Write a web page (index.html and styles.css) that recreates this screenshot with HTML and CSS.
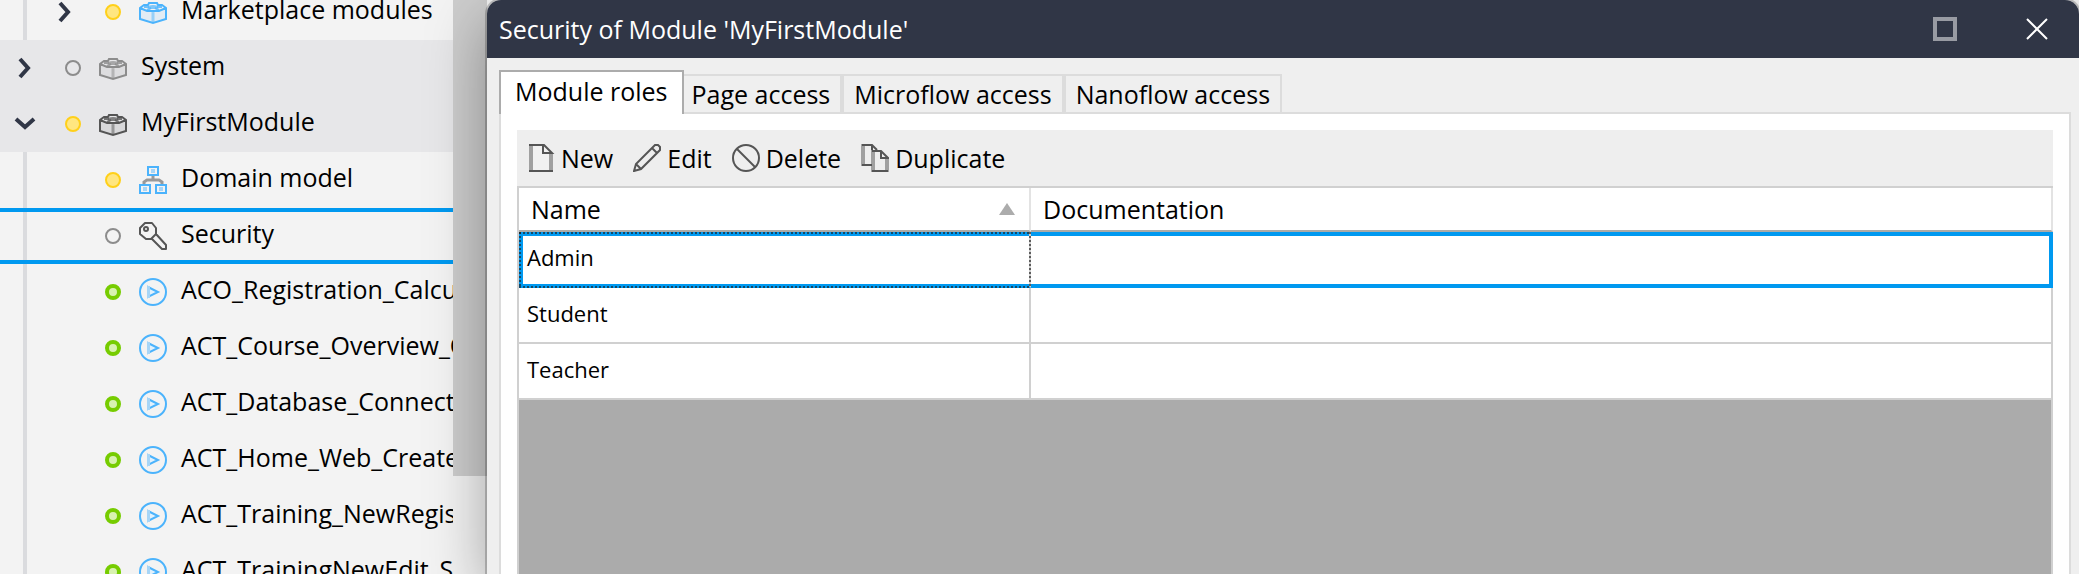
FILE: index.html
```html
<!DOCTYPE html>
<html lang="en">
<head>
<meta charset="utf-8">
<title>Security of Module 'MyFirstModule'</title>
<link rel="stylesheet" href="styles.css">
</head>
<body>
<svg class="defs" aria-hidden="true">
  <symbol id="chevron-right" viewBox="0 0 28 28"><path d="M9 5l8 9-8 9" fill="none" stroke="#303646" stroke-width="4"/></symbol>
  <symbol id="chevron-down" viewBox="0 0 28 28"><path d="M5 9l9 8 9-8" fill="none" stroke="#303646" stroke-width="4"/></symbol>
  <symbol id="module" viewBox="0 0 28 28">
    <path d="M1 11l13 4v10L1 21zM27 11l-13 4v10l13-4z" fill="currentColor" fill-opacity=".1"/>
    <path d="M12.500 14h3v11h-3z" fill="currentColor" fill-opacity=".5"/>
    <path d="M1 10v11l13 4 13-4V10l-4-3h-4l-1-2h-8L9 7H5zM1 10l7 3h12l7-3" fill="none" stroke="currentColor" stroke-width="2"/>
    <ellipse cx="14" cy="9" rx="5" ry="2" fill="currentColor" fill-opacity=".7"/>
    <path d="M5 9h5M18 9h5M8 12l4-2M20 12l-4-2" fill="none" stroke="currentColor" stroke-width="2" stroke-opacity=".8"/>
  </symbol>
  <symbol id="domain" viewBox="0 0 28 28">
    <path d="M5 18v-2l3-2h12l3 2v2M14 10v3" fill="none" stroke="#999" stroke-width="3"/>
    <path d="M9 1h10v8H9zM1 19h10v8H1zM17 19h10v8H17z" fill="#f3f3f3" stroke="#4bb3fc" stroke-width="2"/>
    <path d="M12 3h4v4h-4zM4 21h4v4H4zM20 21h4v4h-4z" fill="#a6d5f7"/>
  </symbol>
  <symbol id="key" viewBox="0 0 28 28">
    <path d="M6 1h7l4 5v6l10 11v4h-4L13 17H7l-6-5V6z" fill="none" stroke="#555" stroke-width="2" stroke-linejoin="round"/>
    <circle cx="7" cy="7" r="2" fill="none" stroke="#555" stroke-width="2"/>
    <path d="M12 17l5-5" stroke="#555" stroke-width="2"/>
  </symbol>
  <symbol id="flow" viewBox="0 0 28 28">
    <circle cx="14" cy="14" r="13" fill="none" stroke="#4bb3fc" stroke-width="2"/>
    <path d="M9 9l10 5-10 5z" fill="#e2f1fc" stroke="#4bb3fc" stroke-width="2"/>
    <path d="M8 8h3v12H8z" fill="#a6d5f7"/>
  </symbol>
  <symbol id="dot-yellow" viewBox="0 0 16 16"><circle cx="8" cy="8" r="7" fill="#ffe680" stroke="#ffd01a" stroke-width="2"/></symbol>
  <symbol id="dot-empty" viewBox="0 0 16 16"><circle cx="8" cy="8" r="7" fill="none" stroke="#8c8c8c" stroke-width="2"/></symbol>
  <symbol id="dot-green" viewBox="0 0 16 16"><circle cx="8" cy="8" r="6" fill="#d8f2b0" stroke="#76cc00" stroke-width="4"/></symbol>
</svg>
<div class="app">
  <nav class="explorer" aria-label="Project explorer">
    <ul class="tree">
      <li class="node nested"><button class="expander" aria-label="Expand"><svg class="icon"><use href="#chevron-right"/></svg></button><svg class="dot"><use href="#dot-yellow"/></svg><svg class="icon blue"><use href="#module"/></svg><span class="label">Marketplace modules</span></li>
      <li class="node module"><button class="expander" aria-label="Expand"><svg class="icon"><use href="#chevron-right"/></svg></button><svg class="dot"><use href="#dot-empty"/></svg><svg class="icon gray"><use href="#module"/></svg><span class="label">System</span></li>
      <li class="node module"><button class="expander" aria-label="Collapse"><svg class="icon"><use href="#chevron-down"/></svg></button><svg class="dot"><use href="#dot-yellow"/></svg><svg class="icon dark"><use href="#module"/></svg><span class="label">MyFirstModule</span></li>
      <li class="node nested"><span class="expander"></span><svg class="dot"><use href="#dot-yellow"/></svg><svg class="icon"><use href="#domain"/></svg><span class="label">Domain model</span></li>
      <li class="node nested selected"><span class="expander"></span><svg class="dot"><use href="#dot-empty"/></svg><svg class="icon"><use href="#key"/></svg><span class="label">Security</span></li>
      <li class="node nested"><span class="expander"></span><svg class="dot"><use href="#dot-green"/></svg><svg class="icon"><use href="#flow"/></svg><span class="label">ACO_Registration_Calcu</span></li>
      <li class="node nested"><span class="expander"></span><svg class="dot"><use href="#dot-green"/></svg><svg class="icon"><use href="#flow"/></svg><span class="label">ACT_Course_Overview_O</span></li>
      <li class="node nested"><span class="expander"></span><svg class="dot"><use href="#dot-green"/></svg><svg class="icon"><use href="#flow"/></svg><span class="label">ACT_Database_Connect</span></li>
      <li class="node nested"><span class="expander"></span><svg class="dot"><use href="#dot-green"/></svg><svg class="icon"><use href="#flow"/></svg><span class="label">ACT_Home_Web_Create</span></li>
      <li class="node nested"><span class="expander"></span><svg class="dot"><use href="#dot-green"/></svg><svg class="icon"><use href="#flow"/></svg><span class="label">ACT_Training_NewRegis</span></li>
      <li class="node nested"><span class="expander"></span><svg class="dot"><use href="#dot-green"/></svg><svg class="icon"><use href="#flow"/></svg><span class="label">ACT_TrainingNewEdit_S</span></li>
    </ul>
  </nav>
  <div class="scrollbar"><div class="thumb"></div></div>
  <section class="dialog" role="dialog" aria-labelledby="dialog-title">
    <header class="titlebar">
      <h1 class="title" id="dialog-title">Security of Module 'MyFirstModule'</h1>
      <button class="window-button" aria-label="Maximize"><svg class="window-icon" viewBox="0 0 24 24"><rect x="2" y="2" width="20" height="20" fill="none" stroke="#989ba3" stroke-width="4"/></svg></button>
      <button class="window-button" aria-label="Close"><svg class="window-icon" viewBox="0 0 24 24"><path d="M2 2l20 20M22 2L2 22" fill="none" stroke="#fff" stroke-width="2"/></svg></button>
    </header>
    <div class="tabs" role="tablist">
      <button class="tab active" role="tab" aria-selected="true">Module roles</button>
      <button class="tab" role="tab" aria-selected="false">Page access</button>
      <button class="tab" role="tab" aria-selected="false">Microflow access</button>
      <button class="tab" role="tab" aria-selected="false">Nanoflow access</button>
    </div>
    <div class="panel" role="tabpanel">
      <div class="toolbar">
        <button class="tool"><svg class="icon" viewBox="0 0 28 28"><path d="M3 1h14l8 8v18H3z" fill="#f1f1f1"/><path d="M4 0v28M24 9v19" stroke="#a0a0a0" stroke-width="4"/><path d="M2 1h15l8 8h-9V1M2 27h24" fill="none" stroke="#555" stroke-width="2"/></svg>New</button>
        <button class="tool"><svg class="icon" viewBox="0 0 28 28"><path d="M1 27l2-7L22 1h3l2 2v3L8 25zM3 20l5 5M19 4l5 5" fill="none" stroke="#555" stroke-width="2"/></svg>Edit</button>
        <button class="tool"><svg class="icon" viewBox="0 0 28 28"><circle cx="14" cy="14" r="13" fill="none" stroke="#555" stroke-width="2"/><path d="M5 5l18 18" stroke="#555" stroke-width="2"/></svg>Delete</button>
        <button class="tool"><svg class="icon" viewBox="0 0 28 28"><path d="M2 0v22M12 6v22M26 13v15" stroke="#a0a0a0" stroke-width="4"/><path d="M1 1h10l5 5M1 21h10M11 1v5M11 7h9l7 7h-7V7M11 27h16" fill="none" stroke="#555" stroke-width="2"/></svg>Duplicate</button>
      </div>
      <div class="grid">
        <table class="roles">
          <thead>
            <tr><th class="name-column" scope="col" aria-sort="ascending"><span class="heading">Name<svg class="sort" viewBox="0 0 16 12"><path d="M8 0l8 12H0z" fill="#acacac"/></svg></span></th><th scope="col"><span class="heading">Documentation</span></th></tr>
          </thead>
          <tbody>
            <tr class="current"><td class="focused">Admin</td><td></td></tr>
            <tr><td>Student</td><td></td></tr>
            <tr><td>Teacher</td><td></td></tr>
          </tbody>
        </table>
      </div>
    </div>
  </section>
</div>
</body>
</html>
```
FILE: styles.css
```css
* { box-sizing: border-box; }

body {
  margin: 0;
  background: #f3f3f3;
  color: #000;
  font: 25px/32px "Open Sans", "Noto Sans", sans-serif;
}

button {
  margin: 0;
  padding: 0;
  border: 0;
  background: none;
  color: inherit;
  font: inherit;
}

.defs { display: none; }
.icon { flex: none; width: 28px; height: 28px; }

.app {
  display: flex;
  height: 100vh;
  overflow: hidden;
}

/* Project explorer */
.explorer {
  flex: none;
  width: 453px;
  overflow: hidden;
}

.tree {
  margin: -16px 0 0;
  padding: 0;
  list-style: none;
  background: linear-gradient(#dadbde, #dadbde) 23px 0 / 4px 100% no-repeat;
}

.node {
  display: flex;
  align-items: center;
  height: 56px;
  padding-left: 11px;
  white-space: nowrap;
}

.nested { padding-left: 51px; }
.module { background: #e7e7e9; }

.selected {
  border: solid #0099f0;
  border-width: 4px 0;
}

.expander {
  display: flex;
  flex: none;
  width: 54px;
}

.dot {
  flex: none;
  width: 16px;
  height: 16px;
  margin-right: 18px;
}

.label {
  padding: 0 0 6px 14px;
}

.blue { color: #4bb3fc; }
.gray { color: #8c8c8c; }
.dark { color: #555; }

.scrollbar {
  flex: none;
  width: 34px;
}

.thumb {
  height: 476px;
  background: #cdcdcd;
}

/* Dialog */
.dialog {
  position: relative;
  display: flex;
  flex: 1;
  flex-direction: column;
  min-width: 0;
  border-radius: 14px 14px 0 0;
  background: #efefef;
  box-shadow: 0 0 0 2px rgba(0, 0, 0, .2), 0 20px 60px rgba(0, 0, 0, .35);
}

.titlebar {
  display: flex;
  align-items: center;
  gap: 8px;
  height: 58px;
  padding-left: 12px;
  border-radius: 14px 14px 0 0;
  background: #303646;
  color: #fff;
}

.title {
  flex: 1;
  margin: 0;
  font-size: 25px;
  font-weight: 400;
}

.window-button {
  display: grid;
  place-items: center;
  width: 84px;
  height: 58px;
}

.window-icon { width: 24px; height: 24px; }

.tabs {
  display: flex;
  align-items: flex-end;
  padding: 12px 12px 0;
}

.tab {
  height: 38px;
  padding: 0 10px;
  border: 2px solid #dcdcdc;
  border-bottom: 0;
}

.active {
  z-index: 1;
  height: 44px;
  margin-bottom: -2px;
  padding: 0 14px 4px;
  border-color: #acacac;
  background: #fff;
}

.active + .tab {
  padding-left: 8px;
  border-left: 0;
}

.panel {
  display: flex;
  flex: 1;
  flex-direction: column;
  margin: 0 8px 0 12px;
  padding: 16px 16px 0;
  border: 2px solid #dcdcdc;
  border-bottom: 0;
  background: #fff;
}

.toolbar {
  display: flex;
  gap: 20px;
  height: 56px;
  padding-left: 10px;
  background: #eee;
}

.tool {
  display: flex;
  align-items: center;
  gap: 6px;
}

.grid {
  flex: 1;
  border: solid #d0d0d0;
  border-width: 2px 0 0 2px;
  background: linear-gradient(#d0d0d0, #d0d0d0) right / 2px 100% no-repeat #ababab;
}

.roles {
  width: 100%;
  border-spacing: 0;
  table-layout: fixed;
  background: #fff;
}

.name-column { width: 512px; }

.roles th {
  height: 44px;
  padding: 0 14px 0 12px;
  border-right: 2px solid #e3e3e3;
  border-bottom: 2px solid #acaba8;
  font-weight: 400;
  text-align: left;
}

.heading {
  display: flex;
  align-items: center;
  justify-content: space-between;
}

.sort { width: 16px; height: 12px; }

.roles td {
  height: 56px;
  padding: 0 8px 4px;
  border-right: 2px solid #d0d0d0;
  border-bottom: 2px solid #d0d0d0;
  font-size: 22px;
}

.current {
  outline: 4px solid #0099f0;
  outline-offset: -4px;
}

.current td { border-bottom-color: transparent; }

.focused { position: relative; }

/* Focus rectangle: two-pixel dashes on all four sides, over the row outline */
.focused::after {
  content: "";
  position: absolute;
  z-index: 1;
  inset: 0 -2px -2px 0;
  --dash: rgba(30, 30, 30, .65) 0 2px, transparent 2px 4px;
  background:
    repeating-linear-gradient(90deg, var(--dash)) top / 100% 2px no-repeat,
    repeating-linear-gradient(90deg, var(--dash)) bottom / 100% 2px no-repeat,
    repeating-linear-gradient(var(--dash)) left / 2px 100% no-repeat,
    repeating-linear-gradient(var(--dash)) right / 2px 100% no-repeat;
}
```
